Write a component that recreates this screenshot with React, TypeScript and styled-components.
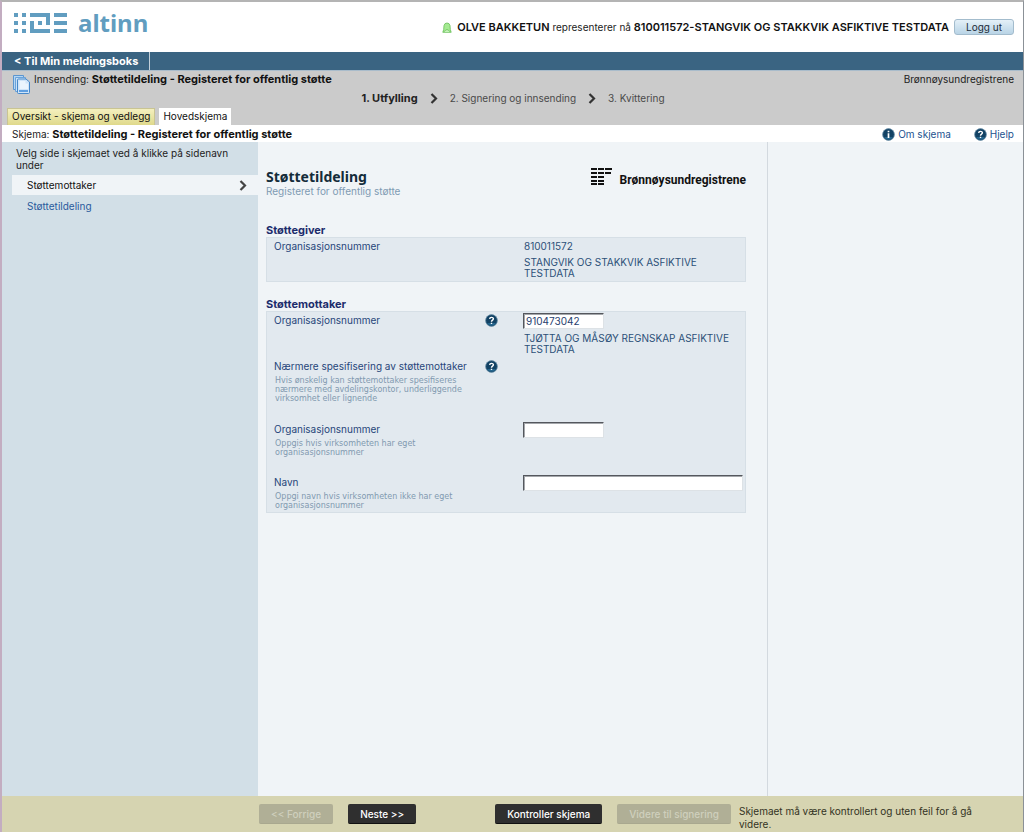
import React from "react";
import styled, { createGlobalStyle, css } from "styled-components";

const GlobalStyle = createGlobalStyle`
  *, *::before, *::after { box-sizing: border-box; }
  body {
    margin: 0;
    font-family: Inter, Verdana, sans-serif;
    font-size: 10px;
    line-height: 12px;
    color: #222;
  }
  h1, h2, p, ul, ol { margin: 0; padding: 0; }
  ul, ol { list-style: none; }
  button, input { font: inherit; }
  a { text-decoration: none; }
  svg { display: block; flex: none; }
`;

const Page = styled.div`
  min-height: 100vh;
  display: flex;
  flex-direction: column;
  background: #fff;
  border-top: 2px solid #b4b4b4;
  border-left: 2px solid #c3adc1;
  border-right: 1px solid #8b9197;
`;

const Header = styled.header`
  display: flex;
  justify-content: space-between;
  align-items: center;
  height: 50px;
  padding: 0 9px 0 12px;
`;

const Brand = styled.a`
  display: flex;
  align-items: center;
  gap: 11px;
  padding-bottom: 8px;
  color: #619dc0;
  font: 700 24px/32px "Noto Sans", sans-serif;
`;

const UserBar = styled.div`
  display: flex;
  align-items: center;
  gap: 5px;
`;

const Strong = styled.strong<{ $weight?: number }>`
  font-size: 11px;
  font-weight: ${(p) => p.$weight ?? 700};
  color: #111;
`;

const LogoutButton = styled.button`
  width: 60px;
  height: 16px;
  padding: 0;
  line-height: 12px;
  color: #1c2b38;
  border: 1px solid #a3bccd;
  border-radius: 3px;
  background: linear-gradient(#e4f0f8, #b9d4e6);
`;

const NavBar = styled.nav`
  display: flex;
  height: 19px;
  background: #3a6482;
  border-bottom: 1px solid #a9bccb;
`;

const BackLink = styled.a`
  display: flex;
  align-items: center;
  padding: 0 11px 0 12px;
  font-size: 11px;
  font-weight: 700;
  color: #fff;
  border-right: 1px solid #c3d0da;
`;

const Process = styled.section`
  background: #cbcbcb;
`;

const ProcessInfo = styled.div`
  display: grid;
  grid-template-columns: 1fr auto 1fr;
  align-items: start;
  height: 37px;
  padding: 2px 9px 0 10px;
`;

const Submission = styled.div`
  display: flex;
  align-items: flex-start;
  gap: 3px;
`;

const Owner = styled.p`
  text-align: right;
`;

const Steps = styled.ol`
  display: flex;
  align-items: center;
  gap: 12px;
  padding-top: 19px;
`;

const Step = styled.li<{ $current?: boolean }>`
  color: ${(p) => (p.$current ? "#222" : "#4a4a4a")};
  font-size: ${(p) => (p.$current ? 11 : 10)}px;
  font-weight: ${(p) => (p.$current ? 700 : 400)};
`;

const Tabs = styled.div`
  display: flex;
  gap: 4px;
  padding-left: 5px;
`;

const Tab = styled.a<{ $active?: boolean }>`
  height: 17px;
  padding: 1px ${(p) => (p.$active ? 3 : 4)}px;
  color: #111;
  border: 1px solid ${(p) => (p.$active ? "#fff" : "#c9c493")};
  border-bottom: 0;
  background: ${(p) => (p.$active ? "#fff" : "linear-gradient(#f4f0bf, #dfd98b)")};
`;

const FormBar = styled.div`
  display: flex;
  justify-content: space-between;
  align-items: center;
  height: 17px;
  padding: 0 9px 0 10px;
`;

const HelpLinks = styled.div`
  display: flex;
  gap: 23px;
`;

const HelpLink = styled.a`
  display: flex;
  align-items: flex-end;
  gap: 3px;
  line-height: 14px;
  color: #23528f;
`;

const Main = styled.main`
  flex: 1;
  display: flex;
  background: #f0f4f7;
`;

const Sidebar = styled.nav`
  flex: 0 0 256px;
  padding: 5px 0 0 10px;
  background: #d2dfe7;
`;

const SidebarText = styled.p`
  padding: 0 10px 4px 4px;
`;

const PageLink = styled.a<{ $active?: boolean }>`
  display: flex;
  justify-content: space-between;
  align-items: center;
  height: 20px;
  margin-bottom: 1px;
  padding: 0 11px 0 15px;
  color: ${(p) => (p.$active ? "#111" : "#2a5a9c")};
  background: ${(p) => (p.$active ? "#f0f4f7" : "transparent")};
`;

const FormArea = styled.section`
  flex: 0 0 510px;
  padding: 25px 21px 0 8px;
  border-right: 1px solid #d3d9df;
`;

const FormHeader = styled.header`
  display: flex;
  justify-content: space-between;
  align-items: flex-start;
  height: 57px;
`;

const FormTitle = styled.h1`
  padding-top: 2px;
  font: 700 14px/16px "Noto Sans", sans-serif;
  color: #142c3a;
`;

const FormSubtitle = styled.p`
  color: #7f9bb3;
`;

const Agency = styled.div`
  display: flex;
  align-items: flex-end;
  gap: 8px;
  padding-top: 1px;
  font: 700 12px/12px Roboto, sans-serif;
  color: #111;
`;

const GroupTitle = styled.h2`
  padding-bottom: 1px;
  font-size: 11px;
  line-height: 12px;
  font-weight: 700;
  color: #1c2c6c;
`;

const Group = styled.div`
  margin-bottom: 16px;
  padding: 0 2px 2px 7px;
  background: #e2e9ef;
  border: 1px solid #d6dfe6;
`;

const Field = styled.div<{ $gap?: number }>`
  display: grid;
  grid-template-columns: 211px 38px 1fr;
  align-items: start;
  padding-bottom: ${(p) => p.$gap ?? 0}px;
`;

const labelText = css`
  display: block;
  line-height: 16px;
  color: #27467a;
`;

const Label = styled.label`${labelText}`;
const LabelText = styled.p`${labelText}`;

const Hint = styled.p`
  max-width: 192px;
  padding: 2px 0 0 1px;
  font: 8px/9px "DejaVu Sans", Verdana, sans-serif;
  color: #8199b0;
`;

const Value = styled.p`
  padding-left: 1px;
  line-height: 16px;
  color: #2c5078;
`;

const Company = styled.p`
  max-width: 210px;
  padding: 3px 0 0 1px;
  line-height: 11px;
  color: #2c5078;
`;

const TextInput = styled.input<{ $wide?: boolean }>`
  display: block;
  width: ${(p) => (p.$wide ? "220px" : "81px")};
  height: 16px;
  margin: 1px 0;
  padding: 0 2px;
  color: #27406e;
  background: #fff;
  border: 1px solid #dde2e6;
  border-top-color: #54575d;
  border-left-color: #54575d;
  border-radius: 0;
  box-shadow: inset 1px 1px 0 #a4a7ab;
`;

const HelpButton = styled.button`
  width: 14px;
  padding: 2px 0 0;
  border: 0;
  background: none;
`;

const Footer = styled.footer`
  display: flex;
  align-items: flex-start;
  min-height: 36px;
  padding: 8px 10px 0 257px;
  background: #d6d4b1;
`;

const ButtonPair = styled.div`
  display: flex;
  gap: 15px;
  margin-right: 79px;

  & + & { margin-right: 8px; }
`;

const ActionButton = styled.button`
  height: 20px;
  padding: 0 12px;
  white-space: nowrap;
  font-weight: 500;
  color: #fff;
  background: #2f2f2f;
  border: 0;
  border-bottom: 1px solid #111;
  border-radius: 2px;

  &:disabled {
    color: #cfcfbd;
    background: #b0af96;
    border-bottom-color: #a9a88f;
  }
`;

const FooterText = styled.p`
  max-width: 240px;
  padding-top: 1px;
  line-height: 13px;
  color: #33331f;
`;

const AltinnMark = () => (
  <svg width="53" height="20" viewBox="0 0 53 20" fill="#619dc0" aria-hidden="true">
    <path d="M0 0h4v4H0zM0 8h4v4H0zM0 16h4v4H0zM8 0h4v4H8zM8 8h4v4H8zM8 16h4v4H8z" />
    <path d="M16 0h20v12h-4V4H16zM16 8h4v8h16v4H16zM24 8h4v4h-4z" />
    <path d="M40 0h13v4H40zM40 8h13v4H40zM40 16h13v4H40z" />
  </svg>
);

const PersonIcon = () => (
  <svg width="10" height="11" viewBox="0 0 10 11" aria-hidden="true">
    <path
      d="M.8 10.300 1.700 7.500 2 3.500Q2.500 1 5 1t3 2.500l.3 4 .9 2.800z"
      fill="#a5ea92"
      stroke="#66bd56"
      strokeWidth=".8"
    />
    <path d="M2 9.800Q5 5.500 8 9.800" fill="#d2f7c8" stroke="#66bd56" strokeWidth=".8" />
  </svg>
);

const DocumentsIcon = () => (
  <svg width="19" height="22" viewBox="0 0 19 22" aria-hidden="true">
    <path d="M1.500 2.500h10v14h-10z" fill="#b5d6f3" stroke="#5b95cf" />
    <path d="M3.500 4.500h10v14h-10z" fill="#c9e1f7" stroke="#6ba3da" />
    <path d="M5.500 7q0-1 1-1h7.500l3.500 3v10.500q0 1-1 1h-10q-1 0-1-1z" fill="#cfe4f8" stroke="#4688c9" />
    <path d="M7.500 8h6v2.500h2.500V16H7.500z" fill="#eaf4fd" />
    <path d="M7 18h9" stroke="#5f9fe0" strokeWidth="2" />
  </svg>
);

const Chevron = ({ color = "#333" }: { color?: string }) => (
  <svg width="8" height="11" viewBox="0 0 8 11" fill="none" stroke={color} strokeWidth="2.200" aria-hidden="true">
    <path d="M1.500 1 6 5.500 1.500 10" />
  </svg>
);

const RoundIcon = ({ info }: { info?: boolean }) => (
  <svg width="13" height="13" viewBox="0 0 13 13" aria-hidden="true">
    <circle cx="6.500" cy="6.500" r="5.900" fill="#124264" stroke="#6f93ab" strokeWidth=".8" />
    <path d="M2 9a5 5 0 0 0 9 0z" fill="#24658d" />
    {info ? (
      <path d="M6.500 5.300v4.700M6.500 2.700v1.600" fill="none" stroke="#fff" strokeWidth="1.700" />
    ) : (
      <path d="M4.700 4.900C4.700 2.900 8.400 2.900 8.400 4.800 8.400 6.200 6.500 6 6.500 7.700M6.500 8.700v1.400" fill="none" stroke="#fff" strokeWidth="1.400" />
    )}
  </svg>
);

const AgencyMark = () => (
  <svg width="21" height="18" viewBox="0 0 21 18" fill="#111" aria-hidden="true">
    <path d="M0 0h6v2H0zM0 4h6v2H0zM0 8h6v2H0zM0 12h6v2H0zM0 15h6v2H0z" />
    <path d="M7 0h6v2H7zM7 4h6v2H7zM7 8h6v2H7zM7 12h6v2H7zM7 15h6v2H7z" />
    <path d="M14 0h7v2h-7zM14 4h6v2h-6z" />
  </svg>
);

export default function App() {
  return (
    <Page>
      <GlobalStyle />
      <Header>
        <Brand href="#">
          <AltinnMark />
          altinn
        </Brand>
        <UserBar>
          <PersonIcon />
          <p>
            <Strong $weight={600}>OLVE BAKKETUN</Strong> representerer nå{" "}
            <Strong $weight={600}>810011572-STANGVIK OG STAKKVIK ASFIKTIVE TESTDATA</Strong>
          </p>
          <LogoutButton type="button">Logg ut</LogoutButton>
        </UserBar>
      </Header>

      <NavBar>
        <BackLink href="#">&lt; Til Min meldingsboks</BackLink>
      </NavBar>

      <Process>
        <ProcessInfo>
          <Submission>
            <DocumentsIcon />
            <p>
              Innsending: <Strong>Støttetildeling - Registeret for offentlig støtte</Strong>
            </p>
          </Submission>
          <Steps>
            <Step $current>1. Utfylling</Step>
            <Chevron />
            <Step>2. Signering og innsending</Step>
            <Chevron />
            <Step>3. Kvittering</Step>
          </Steps>
          <Owner>Brønnøysundregistrene</Owner>
        </ProcessInfo>
        <Tabs>
          <Tab href="#">Oversikt - skjema og vedlegg</Tab>
          <Tab href="#" $active>Hovedskjema</Tab>
        </Tabs>
      </Process>

      <FormBar>
        <p>
          Skjema: <Strong>Støttetildeling - Registeret for offentlig støtte</Strong>
        </p>
        <HelpLinks>
          <HelpLink href="#"><RoundIcon info />Om skjema</HelpLink>
          <HelpLink href="#"><RoundIcon />Hjelp</HelpLink>
        </HelpLinks>
      </FormBar>

      <Main>
        <Sidebar>
          <SidebarText>Velg side i skjemaet ved å klikke på sidenavn under</SidebarText>
          <PageLink href="#" $active>
            Støttemottaker
            <Chevron color="#444" />
          </PageLink>
          <PageLink href="#">Støttetildeling</PageLink>
        </Sidebar>

        <FormArea>
          <FormHeader>
            <div>
              <FormTitle>Støttetildeling</FormTitle>
              <FormSubtitle>Registeret for offentlig støtte</FormSubtitle>
            </div>
            <Agency>
              <AgencyMark />
              Brønnøysundregistrene
            </Agency>
          </FormHeader>

          <GroupTitle>Støttegiver</GroupTitle>
          <Group>
            <Field>
              <LabelText>Organisasjonsnummer</LabelText>
              <span />
              <div>
                <Value>810011572</Value>
                <Company>STANGVIK OG STAKKVIK ASFIKTIVE TESTDATA</Company>
              </div>
            </Field>
          </Group>

          <GroupTitle>Støttemottaker</GroupTitle>
          <Group>
            <Field $gap={3}>
              <Label htmlFor="recipient">Organisasjonsnummer</Label>
              <HelpButton type="button" aria-label="Hjelp til organisasjonsnummer"><RoundIcon /></HelpButton>
              <div>
                <TextInput id="recipient" defaultValue="910473042" />
                <Company>TJØTTA OG MÅSØY REGNSKAP ASFIKTIVE TESTDATA</Company>
              </div>
            </Field>
            <Field $gap={18}>
              <div>
                <LabelText>Nærmere spesifisering av støttemottaker</LabelText>
                <Hint>
                  Hvis ønskelig kan støttemottaker spesifiseres nærmere med avdelingskontor, underliggende
                  virksomhet eller lignende
                </Hint>
              </div>
              <HelpButton type="button" aria-label="Hjelp til spesifisering"><RoundIcon /></HelpButton>
            </Field>
            <Field $gap={17}>
              <div>
                <Label htmlFor="unit">Organisasjonsnummer</Label>
                <Hint>Oppgis hvis virksomheten har eget organisasjonsnummer</Hint>
              </div>
              <span />
              <TextInput id="unit" />
            </Field>
            <Field>
              <div>
                <Label htmlFor="name">Navn</Label>
                <Hint>Oppgi navn hvis virksomheten ikke har eget organisasjonsnummer</Hint>
              </div>
              <span />
              <TextInput id="name" $wide />
            </Field>
          </Group>
        </FormArea>
      </Main>

      <Footer>
        <ButtonPair>
          <ActionButton type="button" disabled>&lt;&lt; Forrige</ActionButton>
          <ActionButton type="button">Neste &gt;&gt;</ActionButton>
        </ButtonPair>
        <ButtonPair>
          <ActionButton type="button">Kontroller skjema</ActionButton>
          <ActionButton type="button" disabled>Videre til signering</ActionButton>
        </ButtonPair>
        <FooterText>Skjemaet må være kontrollert og uten feil for å gå videre.</FooterText>
      </Footer>
    </Page>
  );
}
